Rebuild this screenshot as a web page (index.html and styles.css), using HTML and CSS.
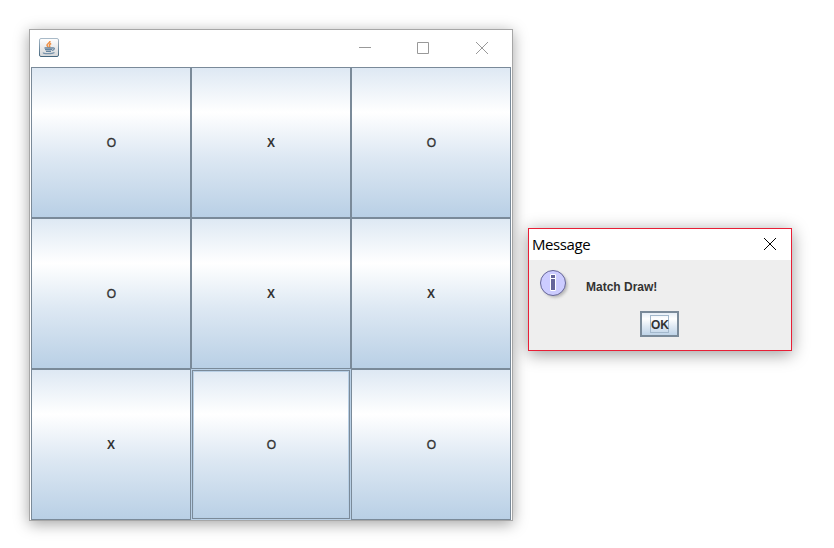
FILE: index.html
```html
<!DOCTYPE html>
<html lang="en">
<head>
<meta charset="utf-8">
<title>Tic Tac Toe</title>
<link rel="stylesheet" href="styles.css">
</head>
<body>
<main class="desktop">
  <section class="window game">
    <header class="titlebar">
      <svg class="java" width="20" height="20" viewBox="0 0 20 20">
        <defs><linearGradient id="tile" x1="0" y1="0" x2="0" y2="1"><stop offset="0" stop-color="#fff"/><stop offset="1" stop-color="#d4d6d8"/></linearGradient>
        <linearGradient id="edge" x1="0" y1="0" x2="0" y2="1"><stop offset="0" stop-color="#a9bac8"/><stop offset="1" stop-color="#45677f"/></linearGradient></defs>
        <rect x=".5" y=".5" width="19" height="18" rx="1.5" fill="url(#tile)" stroke="url(#edge)"/>
        <path d="M11 3c.3 2-3.300 2.500-3 4.300.1 1 1.300 1.500 1.200 2.300M12.200 5.500c-1.500.6-2.300 1.300-1.600 2.300.5.800.2 1.300-.4 1.700" fill="none" stroke="#ee8f45" stroke-width="1.500"/>
        <path d="M5.500 10h8M6 11.700h7M7 13.300h5M13.300 10c3-.8 2.500 2-.3 2.300" fill="none" stroke="#6484a0" stroke-width="1.300"/>
        <path d="M4.500 14.500c-1.500 1.500 8.500 1.700 11 0" fill="none" stroke="#7893ab" stroke-width="1.200"/>
      </svg>
      <div class="controls">
        <svg width="12" height="12" viewBox="0 0 12 12"><path d="M0 5.500h12"/></svg>
        <svg width="12" height="12" viewBox="0 0 12 12"><path d="M.5.5h11v11H.5z"/></svg>
        <svg width="12" height="12" viewBox="0 0 12 12"><path d="M0 0l12 12M12 0L0 12"/></svg>
      </div>
    </header>
    <div class="board">
      <button class="cell o">O</button><button class="cell">X</button><button class="cell o">O</button>
      <button class="cell o">O</button><button class="cell">X</button><button class="cell">X</button>
      <button class="cell">X</button><button class="cell o focused">O</button><button class="cell o">O</button>
    </div>
  </section>
  <section class="window dialog">
    <header class="dialog-title">
      <span class="title-text">Message</span>
      <svg class="close" width="12" height="12" viewBox="0 0 12 12"><path d="M0 0l12 12M12 0L0 12"/></svg>
    </header>
    <div class="dialog-body">
      <div class="message">
        <svg class="info" width="34" height="34" viewBox="0 0 34 34">
          <circle class="info-shadow" cx="16" cy="16" r="12.500"/>
          <circle cx="14" cy="14" r="12.500" fill="#ccf" stroke="#669"/>
          <path d="M11.500 5.500h5v4h-5zM11.500 9.500h5v12h-5z" fill="#669" stroke="#fff"/>
        </svg>
        <span class="message-text">Match Draw!</span>
      </div>
      <button class="ok"><span class="ok-label">OK</span></button>
    </div>
  </section>
</main>
</body>
</html>
```
FILE: styles.css
```css
* { box-sizing: border-box; }
body { margin: 0; background: #fff; font: bold 12px/14px "Liberation Sans", Arial, sans-serif; color: #333; }
.desktop { position: relative; width: 834px; height: 548px; overflow: hidden; }
.window { position: absolute; display: flex; flex-direction: column; background: #fff; }
.game { left: 29px; top: 29px; width: 484px; height: 492px; border: 1px solid #a6a6a6; box-shadow: 0 3px 14px rgba(0, 0, 0, .36); }
.titlebar { height: 37px; display: flex; justify-content: space-between; padding: 8px 24px 0 9px; }
.controls { display: flex; padding-top: 4px; }
.controls svg { fill: none; stroke: #999; }
.controls svg:nth-child(2) { margin: 0 47px 0 46px; }
.board { display: grid; grid-template: repeat(3, 151px) / repeat(3, 160px); padding: 0 1px; }
.cell, .ok { margin: 0; padding: 0; font: inherit; color: inherit; border-radius: 0; border: 1px solid #7a8a99; background: linear-gradient(#dde8f3, #fff 30%, #dde8f3 60%, #b8cfe5) border-box; }
.cell.o { font-weight: normal; padding-left: 1px; -webkit-text-stroke: .35px #333; }
.cell.focused { border-color: #b8cfe5; box-shadow: inset 0 0 0 1px #7a8a99, inset 0 0 0 2px #b8cfe5; }
.dialog { left: 528px; top: 228px; width: 264px; height: 123px; border: 1px solid #e81f36; box-shadow: 0 3px 16px rgba(0, 0, 0, .4); }
.dialog-title { height: 31px; display: flex; justify-content: space-between; padding: 5px 15px 0 3px; color: #000; }
.title-text { font: 15px/21px "Open Sans", "Noto Sans", sans-serif; letter-spacing: -.4px; }
.close { margin-top: 4px; stroke: #000; fill: none; }
.dialog-body { flex: 1; background: #eee; display: flex; flex-direction: column; align-items: center; }
.message { align-self: stretch; display: flex; height: 51px; padding: 9px 0 0 10px; }
.message-text { margin: 11px 0 0 13px; }
.info-shadow { fill: #888; opacity: .55; filter: blur(1.500px); }
.ok { width: 39px; height: 26px; border-width: 2px; display: flex; justify-content: center; align-items: center; margin-right: 1px; }
.ok-label { width: 19px; height: 18px; border: 1px solid #a3b8cc; line-height: 18px; display: flex; justify-content: center; padding-left: 1px; }
```
